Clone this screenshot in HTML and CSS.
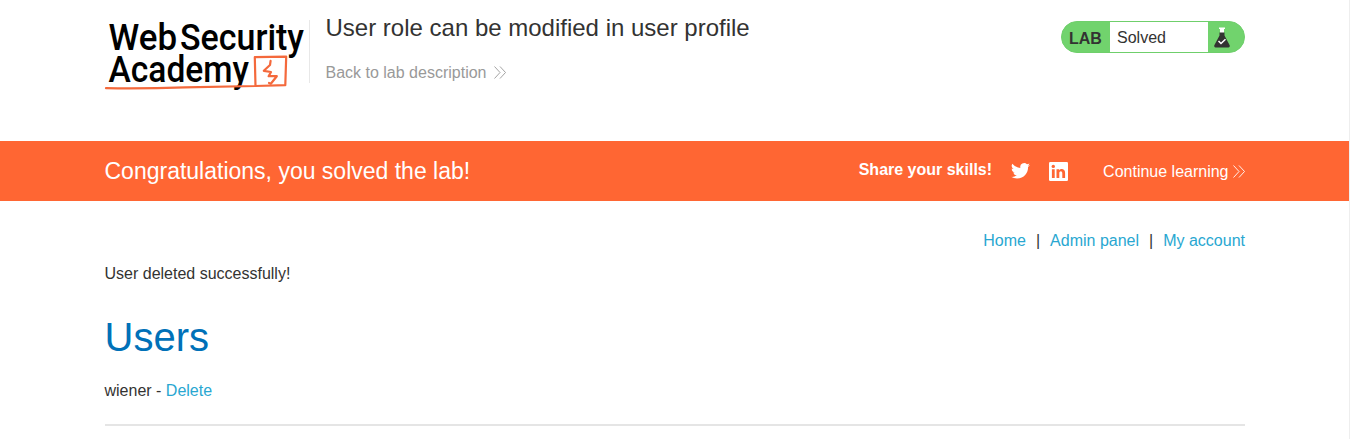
FILE: index.html
```html
<!DOCTYPE html>
<html lang="en">
<head>
<meta charset="utf-8">
<title>User role can be modified in user profile</title>
<link rel="stylesheet" href="styles.css">
</head>
<body>
<header class="container header">
  <svg class="logo" width="201" height="80" viewBox="104 15 201 80" aria-label="Web Security Academy">
    <g class="logo-text">
      <text x="108.500" y="49.5" textLength="68.500" lengthAdjust="spacingAndGlyphs">Web</text>
      <text x="180" y="49.5" textLength="124" lengthAdjust="spacingAndGlyphs">Security</text>
      <text x="108.500" y="82" textLength="140.500" lengthAdjust="spacingAndGlyphs">Academy</text>
    </g>
    <path class="logo-line" d="M106 88.2Q145 88.800 185 87.400L255.500 86L254.800 57.200L286.200 56.600L285.300 85.200L255.500 86"/>
    <path class="logo-line" d="M270.600 60.800L270 65L263.800 70.800L271 72L268.600 76.200L276.800 76.200L270.800 83.800L269 83"/>
  </svg>
  <div class="title">
    <h2>User role can be modified in user profile</h2>
    <a class="back">Back to lab description
      <svg class="chevrons" width="12" height="13" viewBox="0 0 12 13"><path d="M.5 .5L6 6.500L.5 12.500M6 .5L11.500 6.500L6 12.500"/></svg>
    </a>
  </div>
  <div class="status">
    <span class="lab">LAB</span>
    <p>Solved</p>
    <span class="flask">
      <svg width="16" height="21" viewBox="0 0 16 21">
        <path fill="#fff" d="M5 .5H11V2H10V6H6V2H5Z"/>
        <path fill="#333332" d="M5.500 5.500H10.500V8.500L15.800 18.500Q16 20.500 14.500 20.500H1.500Q0 20.500 .2 18.500L5.500 8.500Z"/>
        <path fill="none" stroke="#fff" stroke-width="1.500" d="M4.500 14L7 16.500L11.500 12.200"/>
      </svg>
    </span>
  </div>
</header>
<section class="banner">
  <div class="container banner-row">
    <h4>Congratulations, you solved the lab!</h4>
    <div class="share">
      <span class="share-label">Share your skills!</span>
      <svg class="twitter" width="19" height="16" viewBox="0 0 24 20"><path fill="#fff" d="M23.950 2.400a10 10 0 0 1-2.820.770 4.960 4.960 0 0 0 2.160-2.720 9.900 9.900 0 0 1-3.120 1.180 4.920 4.920 0 0 0-8.380 4.480A13.930 13.930 0 0 1 1.670.980a4.900 4.900 0 0 0 1.520 6.570 4.900 4.900 0 0 1-2.230-.610v.060a4.920 4.920 0 0 0 3.950 4.830 5 5 0 0 1-2.210.080 4.940 4.940 0 0 0 4.600 3.420A9.870 9.870 0 0 1 0 17.360a13.990 13.990 0 0 0 7.550 2.210c9.050 0 14-7.500 14-13.980 0-.210 0-.420-.02-.630a9.940 9.940 0 0 0 2.420-2.560z"/></svg>
      <svg class="linkedin" width="19" height="19" viewBox="0 0 19 19"><rect width="19" height="19" rx="1.200" fill="#fff"/><g fill="#f63"><circle cx="4.300" cy="4.400" r="1.700"/><path d="M2.900 7.200H5.700V16H2.900ZM7.500 7.200H10.200V8.400C11.600 6.300 16.100 6.400 16.100 10.900V16H13.300V11.500C13.300 8.500 10.300 8.800 10.300 11.300V16H7.500Z"/></g></svg>
    </div>
    <a class="continue">Continue learning
      <svg class="chevrons" width="12" height="13" viewBox="0 0 12 13"><path d="M.5 .5L6 6.500L.5 12.500M6 .5L11.500 6.500L6 12.500"/></svg>
    </a>
  </div>
</section>
<main class="container content">
  <nav class="links"><a>Home</a><span>|</span><a>Admin panel</a><span>|</span><a>My account</a></nav>
  <p class="message">User deleted successfully!</p>
  <h1>Users</h1>
  <div class="user">wiener - <a>Delete</a></div>
  <hr>
</main>
</body>
</html>
```

FILE: styles.css
```css
* { box-sizing: border-box; }
html { background: #fff; }
body {
  margin: 0;
  height: 439px;
  overflow: hidden;
  border-right: 1px solid #eee;
  font: 16px/20px "Liberation Sans", Arial, sans-serif;
  color: #333332;
}
h1, h2, h4, p { margin: 0; font-weight: 400; }
.container { width: 1140.5px; margin-left: 104.5px; }
.header { display: flex; height: 141px; align-items: flex-start; }
.logo { margin: 15px 0 0 -.5px; flex: none; overflow: visible; }
.logo-text { font: 500 37.5px Roboto, sans-serif; fill: #000; }
.logo-line { fill: none; stroke: #f4693c; stroke-width: 2.2; stroke-linejoin: round; stroke-linecap: round; }
.title { margin: 20px 0 0 4px; height: 63px; border-left: 1px solid #e8e8e8; padding-left: 15.5px; }
.title h2 { font-size: 24px; line-height: 28px; margin-top: -6px; white-space: nowrap; }
.back { display: flex; align-items: center; gap: 8px; margin-top: 21px; color: #999; }
.back .chevrons { margin-top: -2px; }
.chevrons { fill: none; stroke: currentColor; stroke-width: .9; }
.status {
  display: flex; width: 184px; height: 32px; margin: 21px 0 0 auto;
  border: 1px solid #6fcf6b; border-radius: 16px; overflow: hidden; background: #71d36d;
}
.lab { width: 48px; padding-left: 7px; font-weight: 700; line-height: 34px; }
.status p { width: 98px; padding-left: 7px; line-height: 32px; background: #fff; }
.flask { display: flex; padding: 5px 0 0 6px; }
.banner { height: 60px; background: #f63; color: #fff; }
.banner-row { display: flex; height: 60px; align-items: center; }
.banner h4 { font-size: 23px; line-height: 28px; }
.share { display: flex; align-items: center; margin-left: auto; }
.share-label { font-weight: 700; margin-top: -3px; }
.twitter { margin-left: 19px; }
.linkedin { margin-left: 19px; }
.continue { display: flex; align-items: center; gap: 4.5px; margin-left: 35px; padding-top: 1px; }
.content { padding-top: 30px; }
.links { display: flex; justify-content: flex-end; gap: 10px; }
.links a, .user a { color: #29a7d1; }
.message { margin-top: 13px; }
h1 { margin-top: 29px; font-size: 40px; line-height: 48px; color: #0071b8; }
.user { margin-top: 20px; }
hr { margin: 23px 0 0; border: 0; height: 2px; background: #e5e5e5; }
```
